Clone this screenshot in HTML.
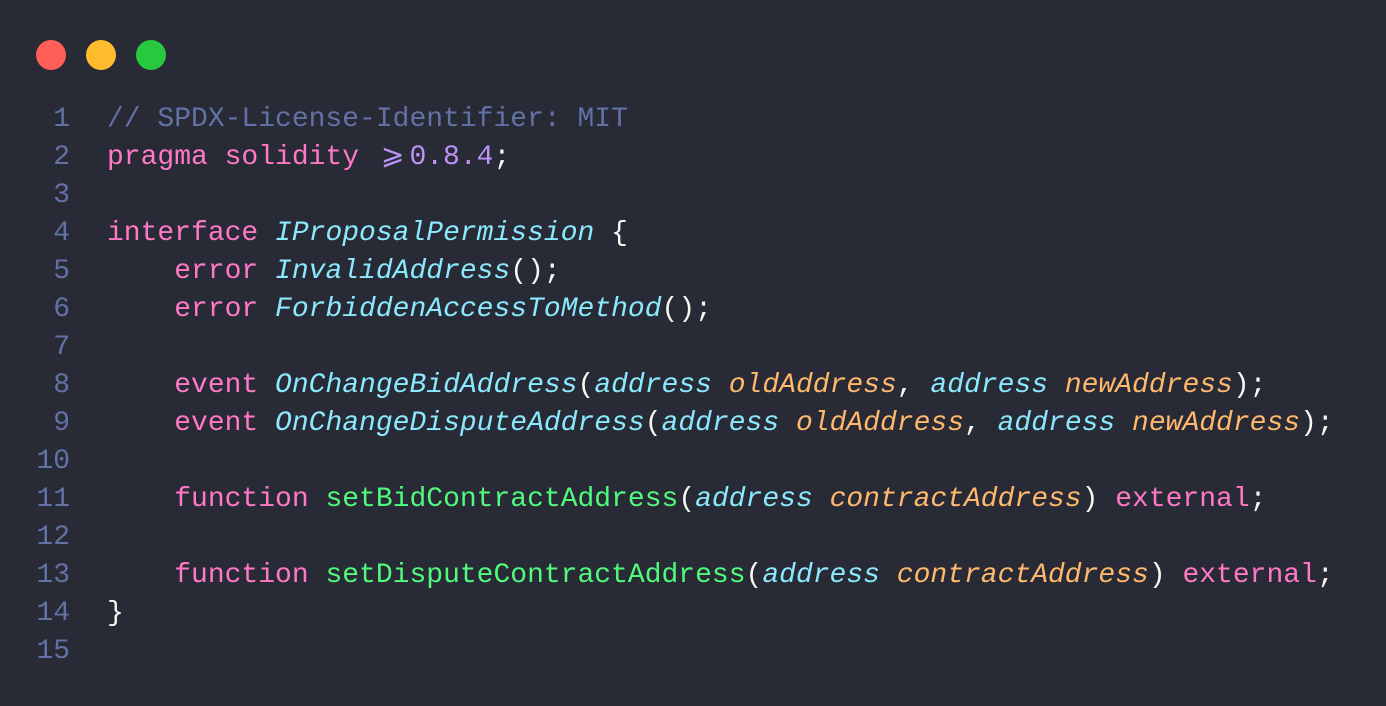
<!DOCTYPE html>
<html><head><meta charset="utf-8"><style>
html,body{margin:0;padding:0;background:#282a36;width:1386px;height:706px;overflow:hidden}
.dot{position:absolute;top:40px;width:30px;height:30px;border-radius:50%}
.code{position:absolute;left:0;top:101px;font-family:"Liberation Mono","DejaVu Sans Mono",monospace;font-size:28px;line-height:38px;color:#f8f8f2;white-space:pre}
.ln{display:inline-block;width:70px;text-align:right;color:#6272a4;margin-right:37px}
.c{color:#6272a4}.k{color:#ff79c6}.t{color:#8be9fd;font-style:italic}.p{color:#ffb86c;font-style:italic}.f{color:#50fa7b}.n{color:#bd93f9}
.ge{display:inline-block;width:2ch;text-align:center;color:#bd93f9}
</style></head><body>
<div class="dot" style="left:36px;background:#ff5f56"></div>
<div class="dot" style="left:86px;background:#ffbd2e"></div>
<div class="dot" style="left:136px;background:#27c93f"></div>
<div class="code"><span class="ln">1</span><span class="c">// SPDX-License-Identifier: MIT</span>
<span class="ln">2</span><span class="k">pragma solidity </span><span class="ge">⩾</span><span class="n">0.8.4</span>;
<span class="ln">3</span>
<span class="ln">4</span><span class="k">interface</span> <span class="t">IProposalPermission</span> {
<span class="ln">5</span>    <span class="k">error</span> <span class="t">InvalidAddress</span>();
<span class="ln">6</span>    <span class="k">error</span> <span class="t">ForbiddenAccessToMethod</span>();
<span class="ln">7</span>
<span class="ln">8</span>    <span class="k">event</span> <span class="t">OnChangeBidAddress</span>(<span class="t">address</span> <span class="p">oldAddress</span>, <span class="t">address</span> <span class="p">newAddress</span>);
<span class="ln">9</span>    <span class="k">event</span> <span class="t">OnChangeDisputeAddress</span>(<span class="t">address</span> <span class="p">oldAddress</span>, <span class="t">address</span> <span class="p">newAddress</span>);
<span class="ln">10</span>
<span class="ln">11</span>    <span class="k">function</span> <span class="f">setBidContractAddress</span>(<span class="t">address</span> <span class="p">contractAddress</span>) <span class="k">external</span>;
<span class="ln">12</span>
<span class="ln">13</span>    <span class="k">function</span> <span class="f">setDisputeContractAddress</span>(<span class="t">address</span> <span class="p">contractAddress</span>) <span class="k">external</span>;
<span class="ln">14</span>}
<span class="ln">15</span></div>
</body></html>
